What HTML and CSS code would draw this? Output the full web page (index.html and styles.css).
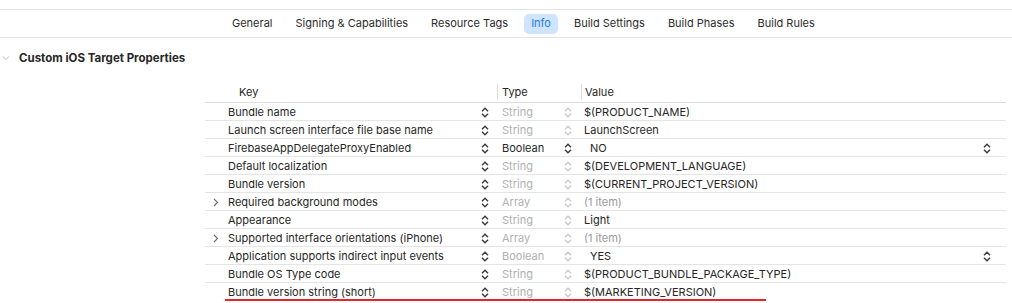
FILE: index.html
```html
<!DOCTYPE html>
<html lang="en">
<head>
  <meta charset="UTF-8">
  <title>Info - Target Properties</title>
  <link rel="stylesheet" href="styles.css">
</head>
<body>

  <div class="tabbar">
    <span class="tab">General</span>
    <span class="tab">Signing &amp; Capabilities</span>
    <span class="tab">Resource Tags</span>
    <span class="tab active">Info</span>
    <span class="tab">Build Settings</span>
    <span class="tab">Build Phases</span>
    <span class="tab">Build Rules</span>
  </div>

  <div class="section-title">
    <svg class="caret" width="8" height="6" viewBox="0 0 8 6"><path d="M1 1.5 L4 4.5 L7 1.5" fill="none" stroke="#b5b5b5" stroke-width="1"/></svg>
    <span>Custom iOS Target Properties</span>
  </div>

  <div class="plist">
    <div class="row head">
      <div class="c-key"><span class="key-label">Key</span></div>
      <div class="c-type">Type</div>
      <div class="c-value">Value</div>
    </div>

    <div class="row">
      <div class="c-key"><span class="disc"></span><span class="key-label">Bundle name</span><span class="step"></span></div>
      <div class="c-type dim">String<span class="step light"></span></div>
      <div class="c-value">$(PRODUCT_NAME)</div>
    </div>
    <div class="row">
      <div class="c-key"><span class="disc"></span><span class="key-label">Launch screen interface file base name</span><span class="step"></span></div>
      <div class="c-type dim">String<span class="step light"></span></div>
      <div class="c-value">LaunchScreen</div>
    </div>
    <div class="row">
      <div class="c-key"><span class="disc"></span><span class="key-label">FirebaseAppDelegateProxyEnabled</span><span class="step"></span></div>
      <div class="c-type">Boolean<span class="step"></span></div>
      <div class="c-value bool">NO<span class="step"></span></div>
    </div>
    <div class="row">
      <div class="c-key"><span class="disc"></span><span class="key-label">Default localization</span><span class="step"></span></div>
      <div class="c-type dim">String<span class="step light"></span></div>
      <div class="c-value">$(DEVELOPMENT_LANGUAGE)</div>
    </div>
    <div class="row">
      <div class="c-key"><span class="disc"></span><span class="key-label">Bundle version</span><span class="step"></span></div>
      <div class="c-type dim">String<span class="step light"></span></div>
      <div class="c-value">$(CURRENT_PROJECT_VERSION)</div>
    </div>
    <div class="row">
      <div class="c-key"><span class="disc closed"></span><span class="key-label">Required background modes</span><span class="step"></span></div>
      <div class="c-type dim">Array<span class="step light"></span></div>
      <div class="c-value dim">(1 item)</div>
    </div>
    <div class="row">
      <div class="c-key"><span class="disc"></span><span class="key-label">Appearance</span><span class="step"></span></div>
      <div class="c-type dim">String<span class="step light"></span></div>
      <div class="c-value">Light</div>
    </div>
    <div class="row">
      <div class="c-key"><span class="disc closed"></span><span class="key-label">Supported interface orientations (iPhone)</span><span class="step"></span></div>
      <div class="c-type dim">Array<span class="step light"></span></div>
      <div class="c-value dim">(1 item)</div>
    </div>
    <div class="row">
      <div class="c-key"><span class="disc"></span><span class="key-label">Application supports indirect input events</span><span class="step"></span></div>
      <div class="c-type dim">Boolean<span class="step light"></span></div>
      <div class="c-value bool">YES<span class="step"></span></div>
    </div>
    <div class="row">
      <div class="c-key"><span class="disc"></span><span class="key-label">Bundle OS Type code</span><span class="step"></span></div>
      <div class="c-type dim">String<span class="step light"></span></div>
      <div class="c-value">$(PRODUCT_BUNDLE_PACKAGE_TYPE)</div>
    </div>
    <div class="row last">
      <div class="c-key"><span class="disc"></span><span class="key-label">Bundle version string (short)</span><span class="step"></span></div>
      <div class="c-type dim">String<span class="step light"></span></div>
      <div class="c-value">$(MARKETING_VERSION)</div>
      <div class="highlight"></div>
    </div>
  </div>

  <script>
    // draw the up/down stepper glyph into every .step slot
    var stepSvg = '<svg width="8" height="11" viewBox="0 0 8 11"><path d="M1 4.2 L4 1.2 L7 4.2 M1 6.8 L4 9.8 L7 6.8" fill="none" stroke="currentColor" stroke-width="1.4"/></svg>';
    document.querySelectorAll('.step').forEach(function (el) {
      el.innerHTML = stepSvg;
    });

    // disclosure arrow for collapsed array rows
    var discSvg = '<svg width="6" height="9" viewBox="0 0 6 9"><path d="M1 1 L4.5 4.5 L1 8" fill="none" stroke="#6e6e6e" stroke-width="1.1"/></svg>';
    document.querySelectorAll('.disc.closed').forEach(function (el) {
      el.innerHTML = discSvg;
    });
  </script>

</body>
</html>
```

FILE: styles.css
```css
body {
  margin: 0;
  background: #ffffff;
  font-family: Inter, "Noto Sans", sans-serif;
  font-size: 11px;
  color: #262626;
  overflow: hidden;
}

.tabbar {
  margin-top: 9px;
  height: 27px;
  border-top: 1px solid #e3e3e3;
  border-bottom: 1px solid #e3e3e3;
  display: flex;
  align-items: center;
  gap: 9px;
  padding-left: 225px;
}

.tab {
  padding: 2px 7px 3px;
  border-radius: 5px;
  color: #2b2b2b;
  line-height: 15px;
}

.tab.active {
  background-color: #cfe4fd;
  color: #1c7cf0;
}

.section-title {
  display: flex;
  align-items: center;
  height: 18px;
  margin-top: 11px;
  font-size: 11.5px;
  font-weight: 700;
  color: #262626;
}

.section-title .caret {
  margin-left: 2px;
  margin-right: 9px;
}

.plist {
  margin: 14px 0 0 205px;
  width: 801px;
}

.row {
  position: relative;
  display: grid;
  grid-template-columns: 292px 84px 425px;
  height: 18px;
  line-height: 17px;
  padding-top: 1px;
  border-bottom: 1px solid #e4e4e4;
  box-sizing: border-box;
}

.row.head {
  height: 22px;
  line-height: 20px;
  padding-top: 0;
  border-bottom: 1px solid #dcdcdc;
}

.row.last {
  border-bottom: none;
}

.c-key,
.c-type,
.c-value {
  display: flex;
  align-items: center;
  white-space: nowrap;
}

.c-key {
  padding-left: 5px;
}

.disc {
  width: 6px;
  display: inline-flex;
  margin-left: 3px;
  margin-right: 9px;
}

.head .c-key {
  padding-left: 34px;
}

.head .c-type,
.head .c-value {
  border-left: 1px solid #dedede;
  height: 16px;
  align-self: center;
  line-height: 16px;
}

.c-type {
  padding-left: 5px;
}

.c-value {
  padding-left: 3px;
}

.head .c-type {
  padding-left: 4px;
}

.head .c-value {
  padding-left: 3px;
}

.step {
  display: inline-flex;
  margin-left: auto;
  color: #3a3a3a;
  width: 8px;
}

.c-key .step {
  margin-right: 8px;
}

.c-type .step {
  margin-right: 9px;
}

.step.light {
  color: #c9c9c9;
}

.dim {
  color: #b0b0b0;
}

.c-value.dim {
  color: #9a9a9a;
}

.c-value.bool {
  padding-left: 9px;
}

.c-value.bool .step {
  margin-right: 15px;
}

.highlight {
  position: absolute;
  left: 20px;
  width: 541px;
  bottom: -1px;
  height: 3px;
  background-color: #e8232a;
}
```
